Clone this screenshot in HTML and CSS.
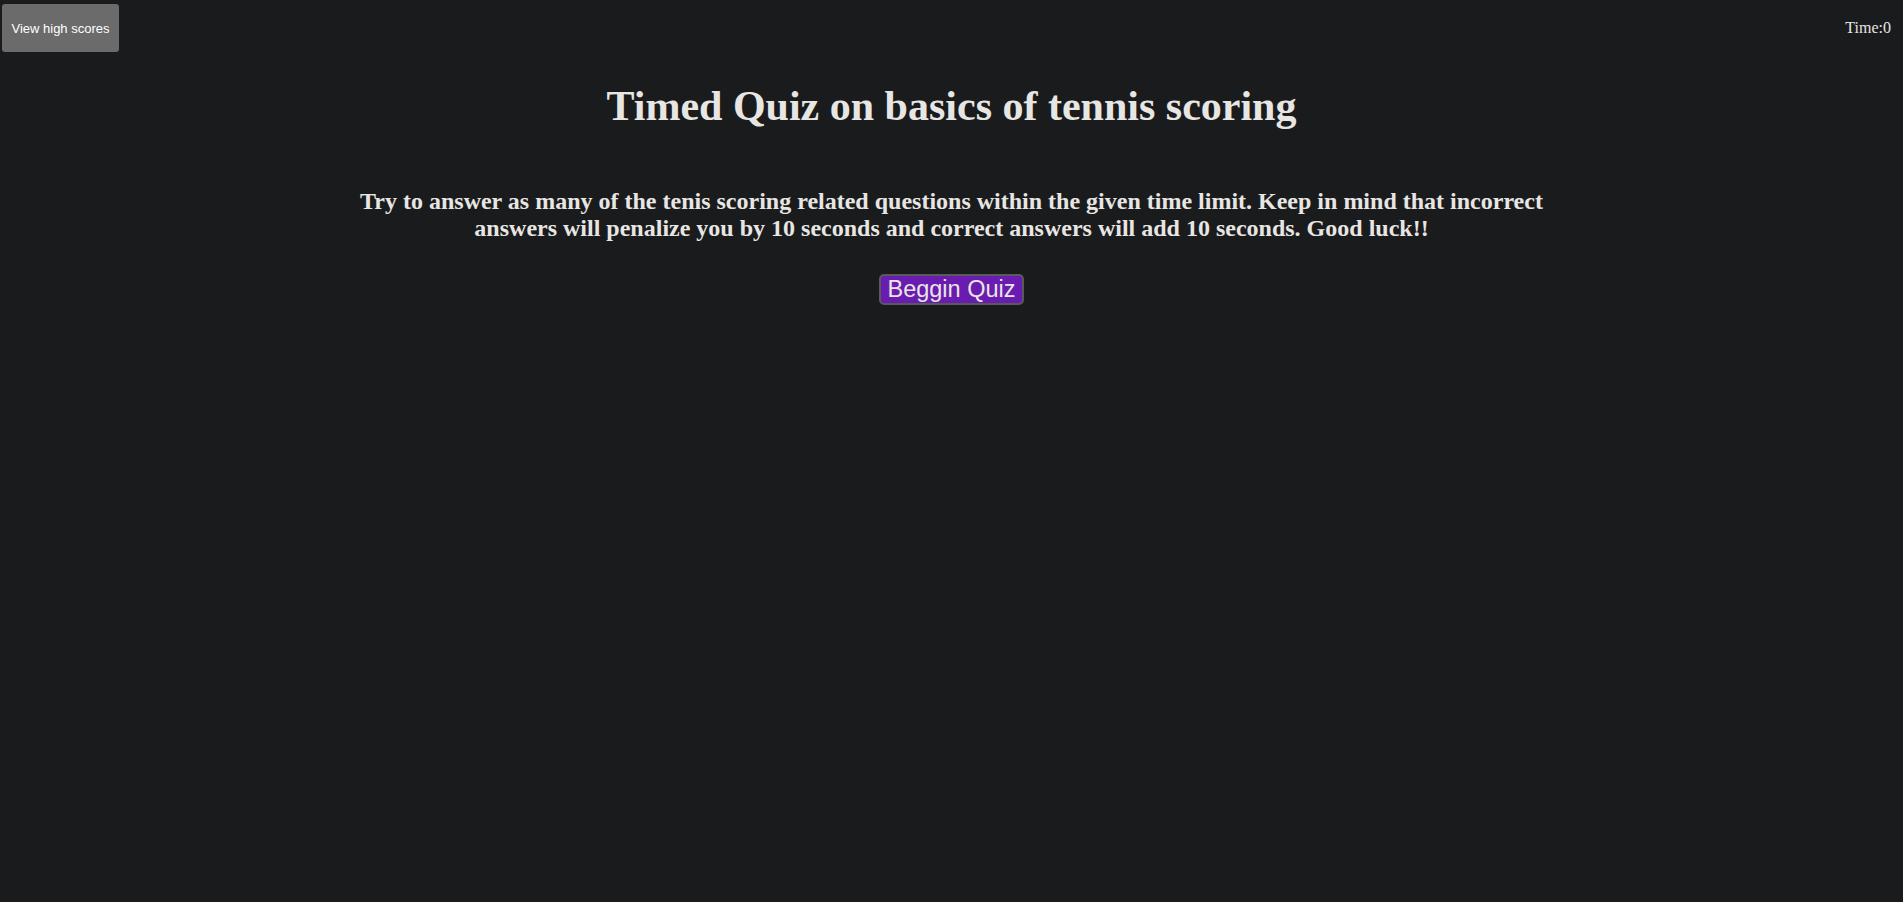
FILE: index.html
```html
<!DOCTYPE html>
<html lang="en">
<head>
<meta charset="utf-8">
<title>Timed Quiz</title>
<link rel="stylesheet" href="styles.css">
</head>
<body>
<header class="top-bar">
  <button class="scores-btn">View high scores</button>
  <div class="timer">Time:<span>0</span></div>
</header>
<main class="intro">
  <h1 class="title">Timed Quiz on basics of tennis scoring</h1>
  <h2 class="lead">Try to answer as many of the tenis scoring related questions within the given time limit. Keep in mind that incorrect answers will penalize you by 10 seconds and correct answers will add 10 seconds. Good luck!!</h2>
  <div class="start-row">
    <button class="start-btn">Beggin Quiz</button>
  </div>
</main>
</body>
</html>
```

FILE: styles.css
```css
html, body {
  margin: 0;
  padding: 0;
  background: #1a1b1d;
  color: #e8e6e3;
  font-family: "Liberation Serif", "Times New Roman", serif;
  height: 100%;
}

.top-bar {
  display: flex;
  justify-content: space-between;
  align-items: flex-start;
  height: 52px;
}

.scores-btn {
  margin: 4px 0 0 2px;
  width: 117px;
  height: 48px;
  padding: 0 8px;
  border: none;
  border-radius: 3px;
  background: #6b6b6b;
  color: #ffffff;
  font-family: "Liberation Sans", Arial, sans-serif;
  font-size: 13px;
}

.timer {
  margin: 19px 12px 0 0;
  font-size: 16px;
  line-height: normal;
  color: #e8e6e3;
}

.intro {
  display: flex;
  flex-direction: column;
  align-items: center;
}

.title {
  margin: 30px 0 0;
  font-size: 42px;
  font-weight: bold;
  text-align: center;
  line-height: normal;
}

.lead {
  margin: 58px 0 0;
  width: 1220px;
  font-size: 24px;
  font-weight: bold;
  text-align: center;
  line-height: normal;
}

.start-row {
  margin-top: 32px;
  display: flex;
  justify-content: center;
}

.start-btn {
  padding: 0 6px;
  border: 2px solid #5a5a5a;
  border-radius: 5px;
  background: #6a1bb0;
  color: #e8e6e3;
  font-family: "Liberation Sans", Arial, sans-serif;
  font-size: 23.5px;
  line-height: 27px;
}
```
